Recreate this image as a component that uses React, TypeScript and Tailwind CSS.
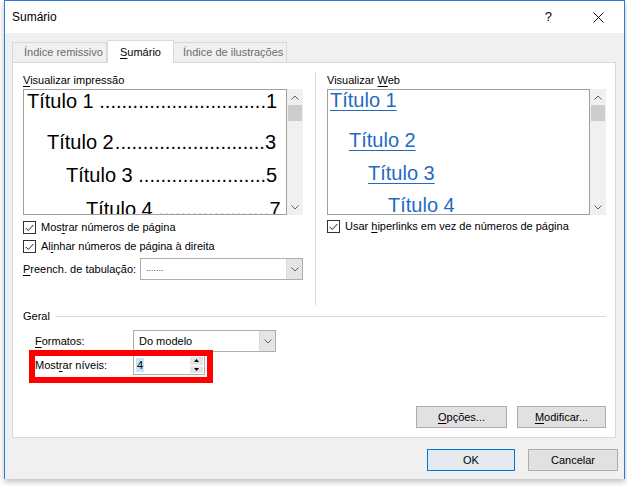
import React from 'react'

const UI = "font-[family-name:'Liberation_Sans',Arial,sans-serif]"
const ARIAL = "font-[family-name:'Liberation_Sans',Arial,sans-serif]"

function U({ children }: { children: React.ReactNode }) {
  return <span className="underline underline-offset-2">{children}</span>
}

function Chevron({ dir }: { dir: 'up' | 'down' }) {
  return (
    <svg width="8" height="5" viewBox="0 0 8 5" className="text-[#606060]">
      {dir === 'up'
        ? <polyline points="0.5,4.5 4,1 7.5,4.5" fill="none" stroke="currentColor" strokeWidth="1" />
        : <polyline points="0.5,0.5 4,4 7.5,0.5" fill="none" stroke="currentColor" strokeWidth="1" />}
    </svg>
  )
}

function Scrollbar() {
  return (
    <div className="w-[16px] h-[126px] bg-[#f0f0f0] flex flex-col items-center">
      <div className="h-[16px] flex items-center justify-center"><Chevron dir="up" /></div>
      <div className="w-[14px] h-[16px] bg-[#cdcdcd]" />
      <div className="flex-1" />
      <div className="h-[16px] flex items-center justify-center"><Chevron dir="down" /></div>
    </div>
  )
}

function CheckBox({ children }: { children: React.ReactNode }) {
  return (
    <div className="flex items-center h-[13px]">
      <div className="w-[13px] h-[13px] border border-[#333] bg-white flex items-center justify-center">
        <svg width="9" height="8" viewBox="0 0 9 8">
          <polyline points="0.8,4 3.3,6.5 8.3,1" fill="none" stroke="#222" strokeWidth="1" />
        </svg>
      </div>
      <span className="ml-[5px] leading-[13px]">{children}</span>
    </div>
  )
}

function Combo({ value, w, small }: { value: string; w: string; small?: boolean }) {
  return (
    <div className={`${w} h-[22px] border border-[#adadad] bg-white flex`}>
      <div className={`flex-1 pl-[5px] flex items-center ${small ? 'text-[9px] text-[#444]' : ''}`}>{value}</div>
      <div className="w-[16px] bg-[#e5e5e5] border-l border-[#dadada] flex items-center justify-center">
        <Chevron dir="down" />
      </div>
    </div>
  )
}

function Btn({ children, w, primary }: { children: React.ReactNode; w: string; primary?: boolean }) {
  return (
    <div
      className={`${w} h-[22px] flex items-center justify-center bg-[#e1e1e1] border ${
        primary ? 'border-[#0078d7] bg-[#e5eaf0]' : 'border-[#adadad]'
      }`}
    >
      {children}
    </div>
  )
}

// print preview line: title, dot leader and page number
function PrintRow({ title, dots, num, pl, mt }: { title: string; dots: number; num: string; pl: string; mt: string }) {
  return (
    <div className={`flex h-[23px] leading-[23px] whitespace-pre ${pl} ${mt}`}>
      <span>{title}</span>
      <span className="flex-1 text-right">{'.'.repeat(dots)}</span>
      <span>{num}</span>
    </div>
  )
}

function WebRow({ title, pl, mt, line = true }: { title: string; pl: string; mt: string; line?: boolean }) {
  return (
    <div className={`h-[23px] leading-[23px] ${pl} ${mt}`}>
      <span className={line ? 'underline underline-offset-[3px] decoration-1' : ''}>{title}</span>
    </div>
  )
}

export default function App() {
  return (
    <div className={`w-[627px] h-[486px] bg-white text-[11px] text-black ${UI}`}>
      <div className="ml-[4px] w-[621px] h-[479px] border border-b-0 border-[#2b7bd6] flex flex-col shadow-[0_3px_6px_rgba(0,0,0,0.25)]">
        {/* title bar */}
        <div className="h-[32px] bg-white flex items-center pl-[7px] text-[12px]">
          <span>Sumário</span>
          <span className="ml-auto mr-[41px] text-[13px]">?</span>
          <svg width="11" height="11" viewBox="0 0 11 11" className="mr-[20px]">
            <path d="M0.5 0.5 L10.5 10.5 M10.5 0.5 L0.5 10.5" stroke="#111" strokeWidth="1" />
          </svg>
        </div>

        {/* body */}
        <div className="flex-1 bg-[#f0f0f0] pl-[7px] pr-[8px] pt-[7px] flex flex-col">
          {/* tabs */}
          <div className="flex items-end h-[22px]">
            <div className="w-[95px] h-[20px] border border-b-0 border-[#d9d9d9] flex items-center pl-[11px] text-[#6d6d6d]">
              Índice remissivo
            </div>
            <div className="relative z-10 -mb-px w-[67px] h-[23px] bg-white border border-b-0 border-[#d9d9d9] flex items-center pl-[12px]">
              <U>S</U>umário
            </div>
            <div className="w-[113px] h-[20px] border border-b-0 border-l-0 border-[#d9d9d9] flex items-center pl-[9px] text-[#6d6d6d]">
              Índice de ilustrações
            </div>
          </div>

          {/* panel */}
          <div className="h-[376px] bg-white border border-[#d9d9d9] pl-[10px] pr-[8px] flex flex-col">
            <div className="flex h-[242px] pt-[9px]">
              {/* left column */}
              <div className="w-[280px] flex flex-col">
                <div className="h-[16px] leading-[16px]"><U>V</U>isualizar impressão</div>
                <div className="flex mt-[1px]">
                  <div className={`w-[264px] h-[126px] border border-[#a0a0a0] bg-white overflow-hidden pr-[10px] text-[20px] ${ARIAL}`}>
                    <PrintRow title="Título 1 " dots={30} num="1" pl="pl-[3px]" mt="mt-0" />
                    <PrintRow title="Título 2" dots={27} num="3" pl="pl-[23px]" mt="mt-[18px]" />
                    <PrintRow title="Título 3 " dots={23} num="5" pl="pl-[42px]" mt="mt-[10px]" />
                    <PrintRow title="Título 4 " dots={20} num="7" pl="pl-[62px]" mt="mt-[11px]" />
                  </div>
                  <Scrollbar />
                </div>
                <div className="mt-[6px]">
                  <CheckBox>Mos<U>t</U>rar números de página</CheckBox>
                </div>
                <div className="mt-[6px]">
                  <CheckBox>Al<U>i</U>nhar números de página à direita</CheckBox>
                </div>
                <div className="mt-[5px] flex items-center">
                  <span className="w-[117px]"><U>P</U>reench. de tabulação:</span>
                  <Combo value="......." w="w-[163px]" small />
                </div>
              </div>

              {/* separator */}
              <div className="ml-[12px] w-px self-stretch bg-[#dcdcdc]" />

              {/* right column */}
              <div className="ml-[11px] w-[279px] flex flex-col">
                <div className="h-[16px] leading-[16px]">Visualizar <U>W</U>eb</div>
                <div className="flex mt-[1px]">
                  <div className={`w-[263px] h-[126px] border border-[#a0a0a0] bg-white overflow-hidden text-[20px] text-[#1f6bc1] ${ARIAL}`}>
                    <WebRow title="Título 1" pl="pl-[2px]" mt="-mt-[1px]" />
                    <WebRow title="Título 2" pl="pl-[21px]" mt="mt-[17px]" />
                    <WebRow title="Título 3" pl="pl-[40px]" mt="mt-[10px]" />
                    <WebRow title="Título 4" pl="pl-[60px]" mt="mt-[9px]" line={false} />
                  </div>
                  <Scrollbar />
                </div>
                <div className="mt-[5px]">
                  <CheckBox>Usar <U>h</U>iperlinks em vez de números de página</CheckBox>
                </div>
              </div>
            </div>

            {/* Geral */}
            <div className="mt-[3px] flex items-center h-[16px]">
              <span>Geral</span>
              <div className="ml-[5px] flex-1 h-px bg-[#dcdcdc] mr-[1px]" />
            </div>
            <div className="mt-[6px] flex items-center pl-[12px]">
              <span className="w-[98px]"><U>F</U>ormatos:</span>
              <Combo value="Do modelo" w="w-[143px]" />
            </div>
            <div className="relative mt-[3px] flex items-center pl-[12px] h-[20px]">
              <span className="w-[98px]">Most<U>r</U>ar níveis:</span>
              <div className="w-[72px] h-[20px] border border-[#adadad] bg-white flex">
                <div className="flex-1 flex items-center pl-[2px]">
                  <span className="bg-[#cce4f7] px-px leading-[14px]">4</span>
                </div>
                <div className="w-[14px] flex flex-col gap-px py-px pr-px">
                  <div className="flex-1 bg-[#e5e5e5] flex items-center justify-center">
                    <svg width="5" height="3" viewBox="0 0 5 3"><polygon points="0,3 2.5,0 5,3" fill="#000" /></svg>
                  </div>
                  <div className="flex-1 bg-[#e5e5e5] flex items-center justify-center">
                    <svg width="5" height="3" viewBox="0 0 5 3"><polygon points="0,0 2.5,3 5,0" fill="#000" /></svg>
                  </div>
                </div>
              </div>
              {/* red highlight annotation */}
              <div className="absolute left-[6px] top-[-5px] w-[184px] h-[33px] border-[6px] border-[#ff0000]" />
            </div>

            <div className="mt-auto mb-[9px] flex justify-end gap-[10px] pr-px">
              <Btn w="w-[91px]"><U>O</U>pções...</Btn>
              <Btn w="w-[89px]"><U>M</U>odificar...</Btn>
            </div>
          </div>

          {/* dialog buttons */}
          <div className="mt-[11px] flex justify-end gap-[13px] -mr-[2px]">
            <Btn w="w-[88px]" primary>OK</Btn>
            <Btn w="w-[90px]">Cancelar</Btn>
          </div>
        </div>
      </div>
    </div>
  )
}
